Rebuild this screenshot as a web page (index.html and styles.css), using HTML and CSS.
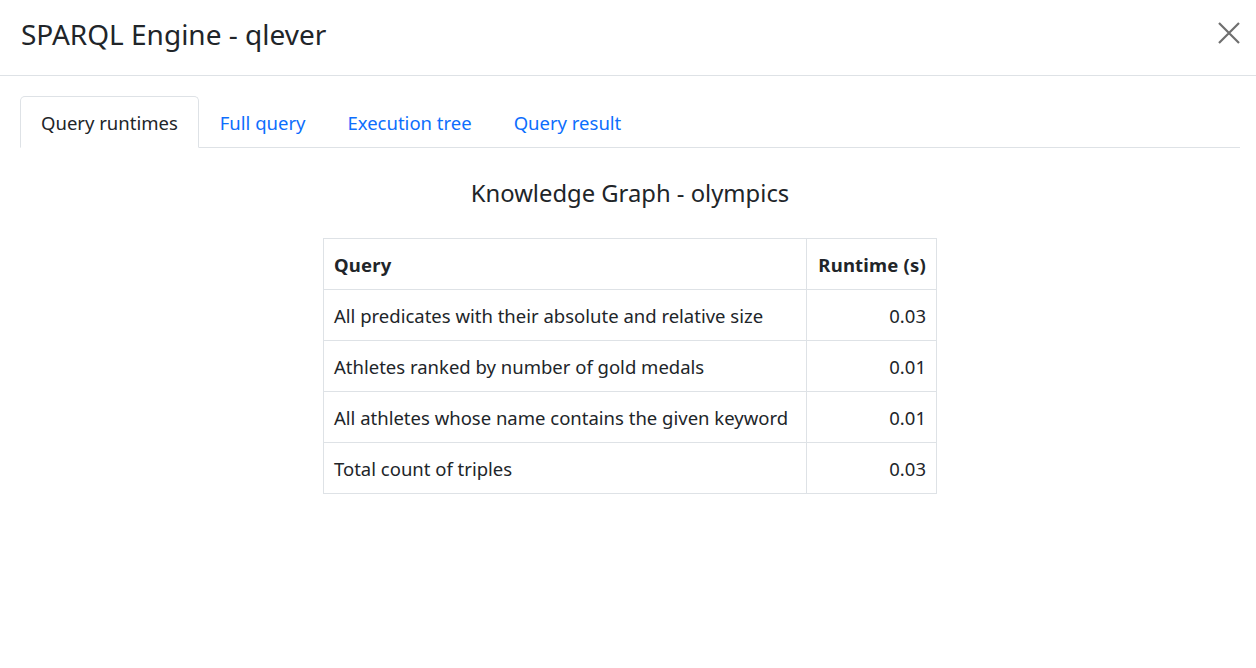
FILE: index.html
```html
<!DOCTYPE html>
<html lang="en">
<head>
<meta charset="utf-8">
<title>SPARQL Engine - qlever</title>
<link rel="stylesheet" href="styles.css">
</head>
<body>
<div class="modal">
  <header class="modal-header">
    <h1 class="modal-title">SPARQL Engine - qlever</h1>
    <button class="close" aria-label="Close">
      <svg width="24" height="24" viewBox="0 0 24 24"><path d="M2 2 L22 22 M22 2 L2 22" stroke="#6f6f6f" stroke-width="2.2" fill="none"/></svg>
    </button>
  </header>
  <main class="modal-body">
    <nav class="tabs">
      <a class="tab active">Query runtimes</a>
      <a class="tab">Full query</a>
      <a class="tab">Execution tree</a>
      <a class="tab">Query result</a>
    </nav>
    <section class="pane">
      <h2 class="kg-title">Knowledge Graph - olympics</h2>
      <table class="runtimes">
        <colgroup><col class="c-query"><col class="c-time"></colgroup>
        <thead>
          <tr><th>Query</th><th class="num">Runtime (s)</th></tr>
        </thead>
        <tbody>
          <tr><td>All predicates with their absolute and relative size</td><td class="num">0.03</td></tr>
          <tr><td>Athletes ranked by number of gold medals</td><td class="num">0.01</td></tr>
          <tr><td>All athletes whose name contains the given keyword</td><td class="num">0.01</td></tr>
          <tr><td>Total count of triples</td><td class="num">0.03</td></tr>
        </tbody>
      </table>
    </section>
  </main>
</div>
</body>
</html>
```
FILE: styles.css
```css
* { box-sizing: border-box; }
html, body { margin: 0; padding: 0; background: #fff; }
body {
  font-family: "Noto Sans", "Open Sans", sans-serif;
  font-size: 18.5px;
  line-height: 30px;
  color: #212529;
}
.modal { width: 1256px; }
.modal-header {
  display: flex;
  align-items: center;
  justify-content: space-between;
  height: 76px;
  padding: 0 12px 0 21px;
  border-bottom: 1px solid #dee2e6;
}
.modal-title {
  margin: 0;
  font-size: 28px;
  font-weight: 400;
  line-height: 1.2;
  position: relative;
  top: -3px;
}
.close {
  background: none;
  border: 0;
  padding: 0;
  width: 30px;
  height: 30px;
  display: flex;
  align-items: center;
  justify-content: center;
  position: relative;
  top: -5px;
  cursor: pointer;
}
.modal-body { padding: 20px 16px 20px 20px; }
.tabs {
  display: flex;
  border-bottom: 1px solid #dee2e6;
}
.tab {
  display: block;
  padding: 11px 20px 9px;
  margin-bottom: -1px;
  border: 1px solid transparent;
  border-top-left-radius: 5px;
  border-top-right-radius: 5px;
  color: #0d6efd;
  text-decoration: none;
  cursor: pointer;
}
.tab.active {
  color: #212529;
  border-color: #dee2e6 #dee2e6 #fff;
  background: #fff;
}
.pane { display: flex; flex-direction: column; align-items: center; }
.kg-title {
  margin: 31px 0 30px;
  font-size: 23.8px;
  font-weight: 400;
  line-height: 1.2;
}
.runtimes {
  border-collapse: collapse;
  table-layout: fixed;
  width: 613px;
}
.c-query { width: 483px; }
.c-time { width: 130px; }
.runtimes th, .runtimes td {
  border: 1px solid #dee2e6;
  padding: 11px 10px 9px;
  text-align: left;
  white-space: nowrap;
  height: 51px;
}
.runtimes th { font-weight: 700; letter-spacing: 0.2px; }
.runtimes .num { text-align: right; }
```
